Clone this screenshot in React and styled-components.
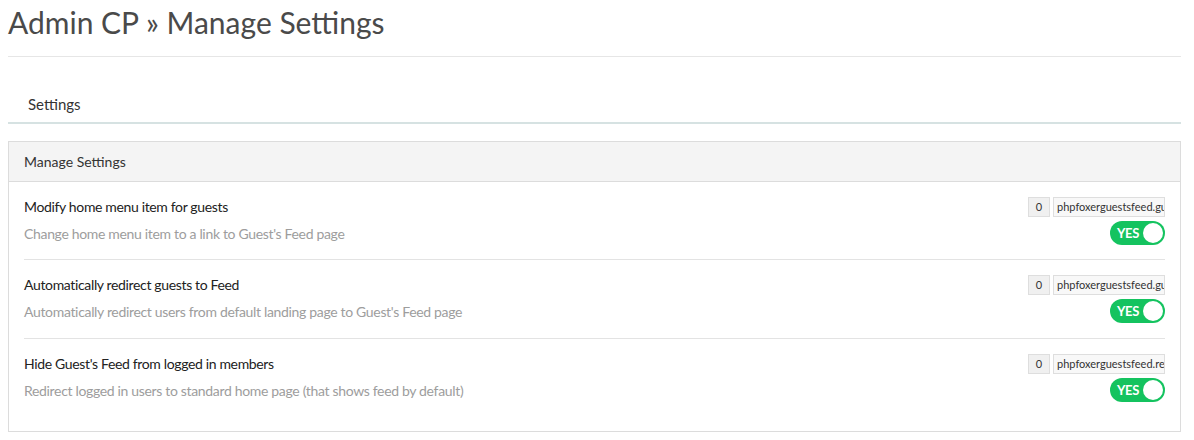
import React from "react";
import styled, { createGlobalStyle } from "styled-components";

const Global = createGlobalStyle`
  html, body { margin: 0; padding: 0; background: #fff; }
  body { font-family: Lato, "Open Sans", Arial, sans-serif; color: #333; }
  * { box-sizing: border-box; }
`;

const Page = styled.div`
  padding: 0 13px 0 8px;
`;

const Title = styled.h1`
  margin: 0;
  padding-top: 3px;
  height: 57px;
  font-size: 30px;
  font-weight: 400;
  line-height: 38px;
  color: #4a4a4a;
  border-bottom: 1px solid #e6e6e6;
`;

const Tabs = styled.div`
  margin-top: 30px;
  height: 37px;
  border-bottom: 2px solid #d6e2e2;
  display: flex;
  align-items: center;
  padding: 0 20px 1px;
`;

const Tab = styled.span`
  font-size: 15px;
  color: #333;
`;

const Panel = styled.section`
  margin-top: 17px;
  border: 1px solid #dcdcdc;
  padding-bottom: 14px;
`;

const PanelHeader = styled.div`
  height: 40px;
  background: #f4f4f4;
  border-bottom: 1px solid #dcdcdc;
  display: flex;
  align-items: center;
  padding: 0 15px;
  font-size: 14px;
  color: #333;
`;

const Body = styled.div`
  padding: 0 15px;
`;

const Row = styled.div`
  display: flex;
  justify-content: space-between;
  padding: ${(p) => (p.first ? "15px 0 14px" : "15px 0 15px")};
  border-bottom: ${(p) => (p.last ? "none" : "1px solid #e3e3e3")};
`;

const Info = styled.div`
  display: flex;
  flex-direction: column;
  gap: 7px;
`;

const Label = styled.div`
  font-size: 14px;
  line-height: 20px;
  letter-spacing: -0.35px;
  color: #222;
`;

const Desc = styled.div`
  font-size: 14px;
  line-height: 20px;
  letter-spacing: -0.33px;
  color: #9d9d9d;
`;

const Controls = styled.div`
  display: flex;
  flex-direction: column;
  align-items: flex-end;
  gap: 4px;
`;

const Inputs = styled.div`
  display: flex;
  gap: 3px;
`;

const Box = styled.div`
  height: 20px;
  width: ${(p) => p.w}px;
  border: 1px solid #dedede;
  background: ${(p) => (p.center ? "#f0f0f0" : "#f8f8f8")};
  font-size: 11px;
  line-height: 18px;
  color: #333;
  padding: 0 3px;
  text-align: ${(p) => (p.center ? "center" : "left")};
  overflow: hidden;
  white-space: nowrap;
`;

const Toggle = styled.div`
  width: 55px;
  height: 24px;
  border-radius: 12px;
  background: #14c35f;
  display: flex;
  align-items: center;
  justify-content: space-between;
  padding: 0 2px 0 7px;
`;

const ToggleText = styled.span`
  color: #fff;
  font-size: 13px;
  font-weight: 700;
  letter-spacing: -0.3px;
`;

const Knob = styled.span`
  width: 20px;
  height: 20px;
  border-radius: 50%;
  background: #fff;
`;

const settings = [
  {
    label: "Modify home menu item for guests",
    desc: "Change home menu item to a link to Guest's Feed page",
    key: "phpfoxerguestsfeed.guest_menu",
  },
  {
    label: "Automatically redirect guests to Feed",
    desc: "Automatically redirect users from default landing page to Guest's Feed page",
    key: "phpfoxerguestsfeed.guest_redirect",
  },
  {
    label: "Hide Guest's Feed from logged in members",
    desc: "Redirect logged in users to standard home page (that shows feed by default)",
    key: "phpfoxerguestsfeed.redirect_members",
  },
];

export default function App() {
  return (
    <Page>
      <Global />
      <Title>Admin CP » Manage Settings</Title>
      <Tabs>
        <Tab>Settings</Tab>
      </Tabs>
      <Panel>
        <PanelHeader>Manage Settings</PanelHeader>
        <Body>
          {settings.map((s, i) => (
            <Row key={s.key} first={i === 0} last={i === settings.length - 1}>
              <Info>
                <Label>{s.label}</Label>
                <Desc>{s.desc}</Desc>
              </Info>
              <Controls>
                <Inputs>
                  <Box w={22} center>0</Box>
                  <Box w={112}>{s.key}</Box>
                </Inputs>
                <Toggle>
                  <ToggleText>YES</ToggleText>
                  <Knob />
                </Toggle>
              </Controls>
            </Row>
          ))}
        </Body>
      </Panel>
    </Page>
  );
}
